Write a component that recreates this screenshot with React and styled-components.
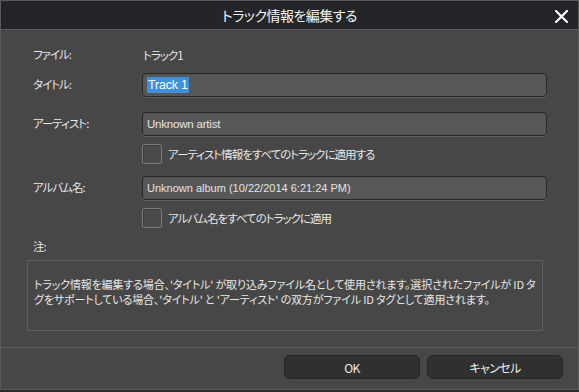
import React from 'react'
import styled, { createGlobalStyle } from 'styled-components'

const GlobalStyle = createGlobalStyle`
  html, body {
    margin: 0;
    padding: 0;
    background: #2b2b2b;
  }
  body {
    font-family: "Noto Sans CJK JP", "Liberation Sans", sans-serif;
    font-feature-settings: "palt";
    -webkit-font-smoothing: antialiased;
  }
`

const Dialog = styled.div`
  width: 577px;
  height: 388px;
  border: 1px solid #5b5b5d;
  background: #474747;
  display: flex;
  flex-direction: column;
  color: #e8e8e8;
`

const TitleBar = styled.div`
  height: 28px;
  flex-shrink: 0;
  background: #242529;
  border-bottom: 1px solid #5c5c5e;
  display: flex;
  align-items: center;
  justify-content: center;
  position: relative;
`

const Title = styled.div`
  font-size: 14px;
  letter-spacing: -0.5px;
  color: #f4f4f4;
  line-height: 1;
`

const CloseButton = styled.button`
  position: absolute;
  right: 9px;
  top: 8px;
  width: 15px;
  height: 15px;
  padding: 0;
  border: 0;
  background: transparent;
  display: flex;
  align-items: center;
  justify-content: center;
  cursor: pointer;
`

const Body = styled.div`
  flex: 1;
  padding: 15px 31px 15px 26px;
  display: flex;
  flex-direction: column;
`

const Row = styled.div`
  display: grid;
  grid-template-columns: 109px 1fr;
  align-items: center;
  padding-left: 6px;
  margin-top: ${p => p.$gap || 0}px;
  min-height: ${p => p.$h || 20}px;
`

const Label = styled.div`
  font-size: 11.5px;
  letter-spacing: -1px;
  color: #e6e6e6;
  line-height: 1;
`

const Value = styled.div`
  font-size: 11.5px;
  letter-spacing: -1px;
  color: #e6e6e6;
  padding-left: 1px;
`

const Input = styled.div`
  height: 22px;
  box-sizing: content-box;
  border: 1px solid #27282a;
  border-radius: 4px;
  background: #575757;
  box-shadow: 0 1px 0 #5e5e5e, inset 0 1px 0 #505050;
  display: flex;
  align-items: center;
  padding: 0 4px;
  font-family: "Liberation Sans", sans-serif;
  font-size: ${p => p.$small ? 11 : 11.5}px;
  color: #e4e4e4;
  letter-spacing: ${p => p.$small ? 0 : -0.2}px;
`

const Selected = styled.span`
  background: #3e8fdd;
  color: #ffffff;
  padding: 1px 1px;
  font-size: 12.5px;
`

const CheckWrap = styled.label`
  display: flex;
  align-items: center;
  gap: 6px;
  cursor: pointer;
`

const Box = styled.span`
  width: 18px;
  height: 18px;
  border: 1px solid #7a7a7c;
  border-radius: 2px;
  background: #4a4a4a;
  box-shadow: inset 1px 1px 0 #3c3c3c;
  flex-shrink: 0;
`

const CheckText = styled.span`
  font-size: 11.5px;
  letter-spacing: -1px;
  color: #e8e8e8;
`

const NoteBox = styled.div`
  box-sizing: border-box;
  margin-top: 3px;
  margin-right: 4px;
  height: 71px;
  border: 1px solid #5c6068;
  padding: 0 6px 7px 6px;
  display: flex;
  align-items: center;
  font-size: 11px;
  line-height: 15px;
  letter-spacing: -0.15px;
  color: #e8e8e8;
`

const Footer = styled.div`
  height: 42px;
  flex-shrink: 0;
  border-top: 1px solid #5e5e60;
  display: flex;
  justify-content: flex-end;
  align-items: flex-start;
  gap: 7px;
  padding: 7px 15px 0 0;
  box-sizing: border-box;
`

const Button = styled.button`
  width: 136px;
  height: 24px;
  border: 1px solid #262627;
  border-radius: 6px;
  background: #303031;
  color: #ececec;
  font-family: "Noto Sans CJK JP", "Liberation Sans", sans-serif;
  font-feature-settings: "palt";
  font-size: 12px;
  letter-spacing: -0.6px;
  cursor: pointer;
  padding: 0;
`

const Check = ({ children }) => (
  <CheckWrap>
    <Box />
    <CheckText>{children}</CheckText>
  </CheckWrap>
)

const App = () => {
  return (
    <>
      <GlobalStyle />
      <Dialog>
        <TitleBar>
          <Title>トラック情報を編集する</Title>
          <CloseButton aria-label="close">
            <svg width="13" height="13" viewBox="0 0 13 13">
              <path d="M1 1 L12 12 M12 1 L1 12" stroke="#ffffff" strokeWidth="2.2" strokeLinecap="square" />
            </svg>
          </CloseButton>
        </TitleBar>
        <Body>
          <Row>
            <Label>ファイル:</Label>
            <Value>トラック1</Value>
          </Row>
          <Row $gap={8} $h={24}>
            <Label>タイトル:</Label>
            <Input><Selected>Track 1</Selected></Input>
          </Row>
          <Row $gap={15} $h={24}>
            <Label>アーティスト:</Label>
            <Input>Unknown artist</Input>
          </Row>
          <Row $gap={8}>
            <span />
            <Check>アーティスト情報をすべてのトラックに適用する</Check>
          </Row>
          <Row $gap={12} $h={24}>
            <Label>アルバム名:</Label>
            <Input $small>Unknown album (10/22/2014 6:21:24 PM)</Input>
          </Row>
          <Row $gap={8}>
            <span />
            <Check>アルバム名をすべてのトラックに適用</Check>
          </Row>
          <Row $gap={9}>
            <Label>注:</Label>
          </Row>
          <NoteBox>
            <div>
              トラック情報を編集する場合、'タイトル' が取り込みファイル名として使用されます。選択されたファイルが ID タ<br />
              グをサポートしている場合、'タイトル' と 'アーティスト' の双方がファイル ID タグとして適用されます。
            </div>
          </NoteBox>
        </Body>
        <Footer>
          <Button>OK</Button>
          <Button>キャンセル</Button>
        </Footer>
      </Dialog>
    </>
  )
}

export default App
